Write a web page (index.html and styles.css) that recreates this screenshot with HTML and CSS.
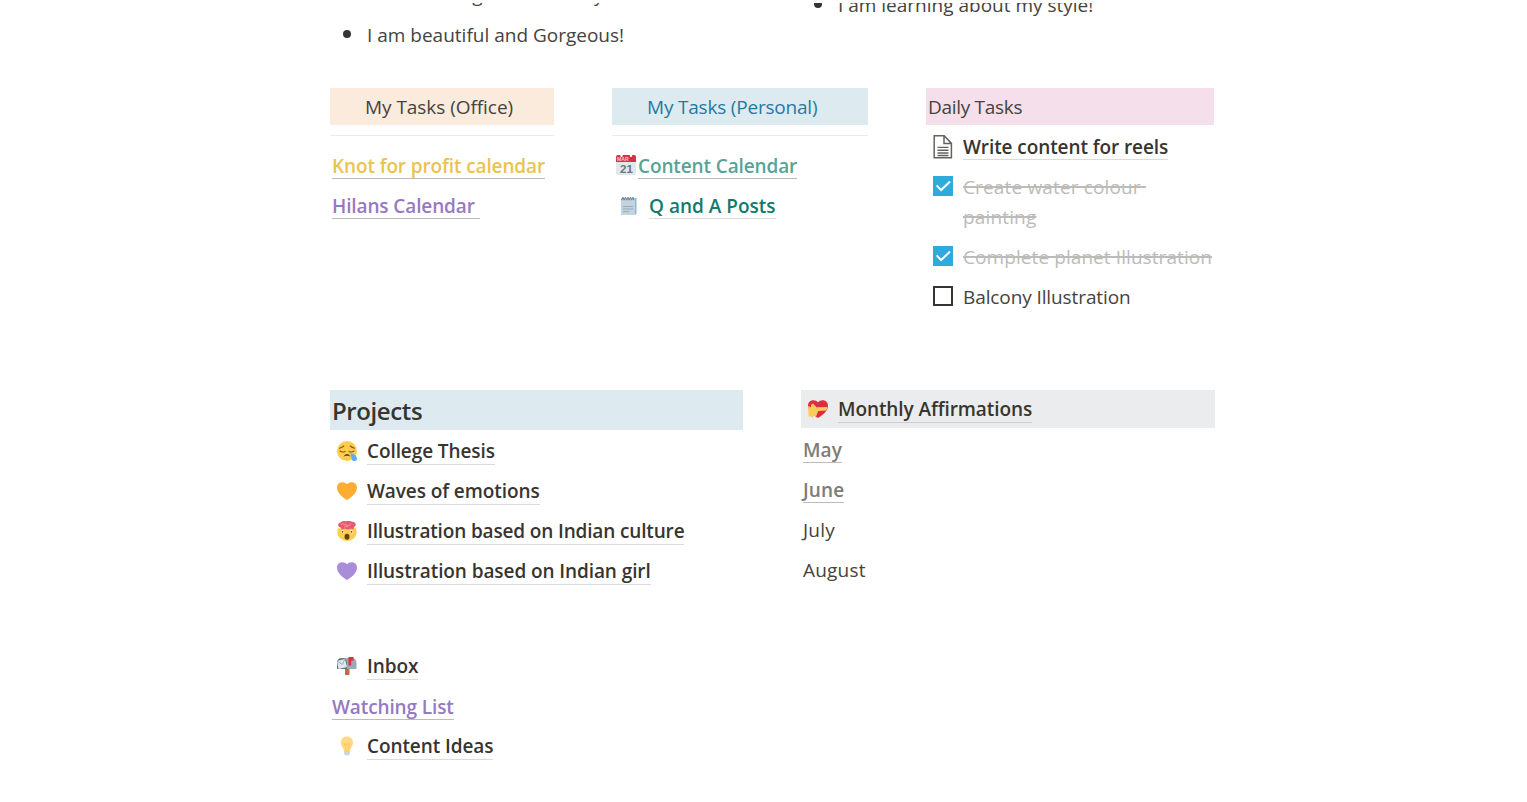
FILE: index.html
```
<!DOCTYPE html>
<html lang="en">

<head>
    <meta charset="UTF-8">
    <meta name="viewport" content="width=device-width, initial-scale=1.0">
    <title>Dashboard</title>
    <link rel="stylesheet" href="styles.css">
</head>

<body>
    <main class="page">
        <section class="columns affirmations">
            <ul class="list">
                <li>I am learning to be healthy</li>
                <li>I am beautiful and Gorgeous!</li>
            </ul>
            <ul class="list right">
                <li>I am learning about my style!</li>
            </ul>
        </section>

        <section class="columns tasks">
            <div class="office">
                <h3 class="label orange indent">My Tasks (Office)</h3>
                <hr>
                <div class="block"><a class="link yellow">Knot for profit calendar</a></div>
                <div class="block"><a class="link purple">Hilans Calendar&nbsp;</a></div>
            </div>

            <div class="personal">
                <h3 class="label blue indent">My Tasks (Personal)</h3>
                <hr>
                <div class="block">
                    <svg class="calendar" viewBox="0 0 20 20">
                        <path fill="#e1e8ed" d="M0 6h20v12a2 2 0 0 1-2 2H2a2 2 0 0 1-2-2z" />
                        <path fill="#dd2e44" d="M0 2a2 2 0 0 1 2-2h16a2 2 0 0 1 2 2v5H0z" />
                        <circle cx="5.5" cy=".8" r="1.2" fill="#fff" />
                        <circle cx="15" cy=".8" r="1.2" fill="#fff" />
                        <text x="1" y="6.2" font-size="5.2" font-weight="bold" fill="#f5c3ca">MAR</text>
                        <text x="4" y="17.500" font-size="11.500" font-weight="bold" fill="#66757f">21</text>
                    </svg>
                    <a class="link teal">Content Calendar</a>
                </div>
                <div class="block">
                    <span class="icon">
                        <svg viewBox="0 0 20 20">
                            <path fill="#8fb8da" d="M5 2h12.5v15.5L16 19H4z" />
                            <path fill="#c3d3e0" d="M2 2h14v17H2z" />
                            <path stroke="#9aaab4" d="M4 10.5h10M4 13h10M4 15.7h6" />
                            <path fill="none" stroke="#66757f" stroke-width=".9" d="M2.5 4.2 4 1.2l1 3 1.5-3 1 3 1.5-3 1 3 1.5-3 1 3 1.5-3 1 3" />
                        </svg>
                    </span>
                    <a class="title green">Q and A Posts</a>
                </div>
            </div>

            <div class="daily">
                <h3 class="label pink">Daily Tasks</h3>
                <div class="block first">
                    <span class="icon">
                        <svg class="doc" viewBox="0 0 20 24">
                            <path fill="none" stroke="#65635e" stroke-width="1.5" d="M1.2.8h10l7.2 7.6v14.3H1.2zM11 .8v7.8h7.4" />
                            <path stroke="#65635e" stroke-width="1.4" d="M4.5 12.4h11M4.5 15.2h11M4.5 18h11M4.5 20.5h11" />
                        </svg>
                    </span>
                    <a class="title">Write content for reels</a>
                </div>
                <div class="block">
                    <span class="icon check">
                        <svg viewBox="0 0 20 20">
                            <path fill="#2eaadc" d="M0 0h20v20H0z" />
                            <path fill="none" stroke="#fff" stroke-width="2" d="M3.6 9.4 8.1 14l9-8.4" />
                        </svg>
                    </span>
                    <s class="done wide">Create water colour&nbsp; <br>painting</s>
                </div>
                <div class="block">
                    <span class="icon check">
                        <svg viewBox="0 0 20 20">
                            <path fill="#2eaadc" d="M0 0h20v20H0z" />
                            <path fill="none" stroke="#fff" stroke-width="2" d="M3.6 9.4 8.1 14l9-8.4" />
                        </svg>
                    </span>
                    <s class="done">Complete planet Illustration</s>
                </div>
                <div class="block">
                    <span class="icon check">
                        <svg viewBox="0 0 20 20">
                            <path fill="#fff" stroke="#37352f" stroke-width="2" d="M1 1h18v18H1z" />
                        </svg>
                    </span>
                    <span class="todo">Balcony Illustration</span>
                </div>
            </div>
        </section>

        <section class="columns bottom">
            <div class="projects">
                <h2 class="heading">Projects</h2>
                <div class="block">
                    <span class="icon">
                        <svg viewBox="0 0 20 20">
                            <circle cx="10" cy="10" r="10" fill="#ffcc4d" />
                            <path fill="none" stroke="#7d5518" stroke-width="1.1" stroke-linecap="round" d="M2.4 7.2Q4.5 6.8 6.8 5M13.2 5q2 1.8 4.4 2.2M3 10q2.2 1.8 5 .4M12 10.4q2.5 1.4 5-.4" />
                            <path fill="#664500" d="M6.5 15.5q3.5-4.8 7 0-3.5-1.5-7 0z" />
                            <path fill="#5dadec" d="M12.8 12.5c4 0 7.2 2.2 7.2 5.3 0 2.6-4.2 3-5.2.6-.7-1.8 0-3-2-5.9z" />
                        </svg>
                    </span>
                    <a class="title">College Thesis</a>
                </div>
                <div class="block">
                    <span class="icon">
                        <svg viewBox="0 0 20 20">
                            <path fill="#ffac33" d="M10 3.3C7.5-.2 0 .5 0 6.700 0 12 5.800 16.500 10 18.900c4.200-2.400 10-6.900 10-12.200C20 .5 12.500-.2 10 3.300z" />
                        </svg>
                    </span>
                    <a class="title">Waves of emotions</a>
                </div>
                <div class="block">
                    <span class="icon">
                        <svg viewBox="0 0 20 20">
                            <path fill="#ffcc4d" d="M1 7Q-1 14 3.500 17.500 7 20 10 20t6.500-2.500Q21 14 19 7L15 8H5z" />
                            <path fill="#ea596e" d="M4 8.500Q5 6.500 2 6-.2 2 3.500 1.500 6-.5 9 .3 12-.8 15 .8q4.500.3 3.500 4Q16 6.500 17 8.500l-3-.8-3 .8-3-.8z" />
                            <path fill="none" stroke="#f8a4af" stroke-width=".8" d="M4 3.500q3-1.500 5 .5t5-1M7 6q2-1 4 0" />
                            <circle cx="5.500" cy="10.800" r="1.500" fill="#fff" />
                            <circle cx="14.500" cy="10.800" r="1.500" fill="#fff" />
                            <circle cx="5.500" cy="10.800" r=".9" fill="#664500" />
                            <circle cx="14.500" cy="10.800" r=".9" fill="#664500" />
                            <ellipse cx="10" cy="15.800" rx="2.500" ry="3" fill="#664500" />
                        </svg>
                    </span>
                    <a class="title tight">Illustration based on Indian culture</a>
                </div>
                <div class="block">
                    <span class="icon">
                        <svg viewBox="0 0 20 20">
                            <path fill="#aa8dd8" d="M10 3.300C7.500-.2 0 .5 0 6.700 0 12 5.800 16.500 10 18.900c4.200-2.400 10-6.900 10-12.200C20 .5 12.500-.2 10 3.300z" />
                        </svg>
                    </span>
                    <a class="title">Illustration based on Indian girl</a>
                </div>
            </div>

            <div class="monthly">
                <div class="label gray">
                    <span class="icon">
                        <svg viewBox="0 0 20 20">
                            <path fill="#dd2e44" d="M10 3.300C7.500-.2 0 .5 0 6.700 0 12 5.800 16.500 10 18.900c4.200-2.400 10-6.900 10-12.200C20 .5 12.500-.2 10 3.300z" />
                            <path fill="#fdcb58" d="M.2 7 3 8.200Q2.500 5 5 4.500L8.500 8.300 19.500 8l-1.200 3.500-8 .5L8 17.500l-2-1L4.500 19l-2-2L.5 18z" />
                        </svg>
                    </span>
                    <a class="title">Monthly Affirmations</a>
                </div>
                <div class="block first"><a class="link muted">May</a></div>
                <div class="block"><a class="link muted">June</a></div>
                <div class="block"><span class="month">July</span></div>
                <div class="block"><span class="month">August</span></div>
            </div>
        </section>

        <section class="more">
            <div class="block">
                <span class="icon">
                    <svg viewBox="0 0 20 20">
                        <path fill="#c1694f" d="M8 12h4.500v7H8z" />
                        <path fill="#99aab5" d="M5 2h10q4.500.4 4.500 5v6H5z" />
                        <path fill="#66757f" d="M0 7q0-5 5-5 4.800 0 5 5v6H0z" />
                        <path fill="#e1e8ed" d="m0 5 8-2 2 8-8.500 2z" />
                        <path fill="none" stroke="#99aab5" d="m0 5 5.300 3.500L8 3" />
                        <path fill="#dd2e44" d="M11.500 1h5v3.500h-2.300v5h-2.700z" />
                    </svg>
                </span>
                <a class="title">Inbox</a>
            </div>
            <div class="block watching"><a class="link purple">Watching List</a></div>
            <div class="block">
                <span class="icon">
                    <svg viewBox="0 0 20 20">
                        <path fill="#ffd983" d="M10 .5c-3.800 0-6 2.600-6 5.900 0 4.200 2.700 5 3 8.600h6c.3-3.600 3-4.400 3-8.600C16 3.100 13.800.5 10 .5z" />
                        <path fill="none" stroke="#ffcc4d" d="M9 15 7.500 7.500l2.500 1 2.500-1L11 15" />
                        <path fill="#ccd6dd" d="M7 15h6v3l-1.500 1.500h-3L7 18z" />
                    </svg>
                </span>
                <a class="title">Content Ideas</a>
            </div>
        </section>
    </main>
</body>

</html>
```
FILE: styles.css
```
* {
    margin: 0;
    padding: 0;
    box-sizing: border-box;
}

body {
    background-color: #fff;
    color: #45433e;
    font-family: "Segoe UI", "Open Sans", "Noto Sans", sans-serif;
    font-size: 19px;
    line-height: 30px;
}

.page {
    width: 885px;
    margin: 3px 0 0 330px;
    height: 799px;
    overflow: hidden;
}

.columns {
    display: flex;
    gap: 58px;
}

.affirmations {
    height: 85px;
}

.list {
    width: 413px;
    list-style: none;
    margin-top: -28px;
}

.list.right {
    margin-top: -18px;
}

.list li {
    display: flex;
    align-items: center;
    padding: 5px 2px;
    white-space: nowrap;
}

.list li::before {
    content: "";
    width: 8px;
    height: 8px;
    margin: 0 16px 2px 11px;
    border-radius: 50%;
    background-color: #37352f;
}

.tasks {
    height: 302px;
}

.office {
    width: 224px;
}

.personal {
    width: 256px;
}

.daily {
    width: 288px;
}

.label {
    display: flex;
    align-items: center;
    height: 37px;
    padding: 0 2px;
    font-size: 19px;
    font-weight: normal;
}

.indent {
    padding-left: 35px;
}

.orange {
    background-color: #faebdd;
    letter-spacing: -0.05px;
}

.blue {
    background-color: #ddebf1;
    color: #1f7aa2;
    letter-spacing: -0.2px;
}

.pink {
    background-color: #f4dfeb;
    letter-spacing: -0.3px;
}

.gray {
    height: 38px;
    padding-bottom: 1px;
    background-color: #ebeced;
}

hr {
    margin: 10px 0;
    border: 0;
    border-top: 1px solid #ebebea;
}

.block {
    display: flex;
    min-height: 40px;
    padding: 5px 2px;
    white-space: nowrap;
}

.block.first {
    margin-top: 2px;
}

.icon {
    display: flex;
    align-items: center;
    justify-content: center;
    width: 30px;
    height: 30px;
    margin-right: 5px;
    flex-shrink: 0;
}

.icon svg {
    width: 20px;
    height: 20px;
}

.icon .doc {
    height: 24px;
}

.check {
    height: 28px;
}

.calendar {
    width: 20px;
    height: 20px;
    margin: 4px 2px 0;
    font-family: "Liberation Sans", sans-serif;
}

.title,
.link {
    height: 28px;
    color: #37352f;
    font-weight: 600;
    letter-spacing: -0.09px;
    border-bottom: 1px solid #dcdbda;
}

.projects .title,
.monthly .title,
.more .title {
    height: 29px;
}

.gray .title {
    border-color: #cfcfcf;
}

.link {
    letter-spacing: -0.12px;
    border-color: #bdbcba;
}

.tight {
    letter-spacing: -0.15px;
}

.yellow {
    color: #e9c44e;
}

.purple {
    color: #9679c0;
}

.teal {
    color: #57a398;
}

.green {
    color: #0f7b6c;
    letter-spacing: 0;
}

.muted {
    color: #7d7c78;
    letter-spacing: 0.1px;
}

.todo {
    letter-spacing: -0.1px;
}

.done {
    color: #bcbbb9;
    letter-spacing: 0.08px;
    text-decoration-thickness: 2px;
}

.wide {
    letter-spacing: 0.15px;
}

.month {
    letter-spacing: 0.2px;
}

.projects {
    width: 413px;
}

.monthly {
    width: 414px;
}

.heading {
    height: 40px;
    margin-bottom: 1px;
    padding: 0 2px;
    background-color: #ddebf1;
    color: #37352f;
    font-size: 24px;
    font-weight: 600;
    letter-spacing: -0.4px;
    line-height: 41px;
}

.more {
    margin-top: 55px;
}

.watching {
    padding: 6px 2px 4px;
}
```
